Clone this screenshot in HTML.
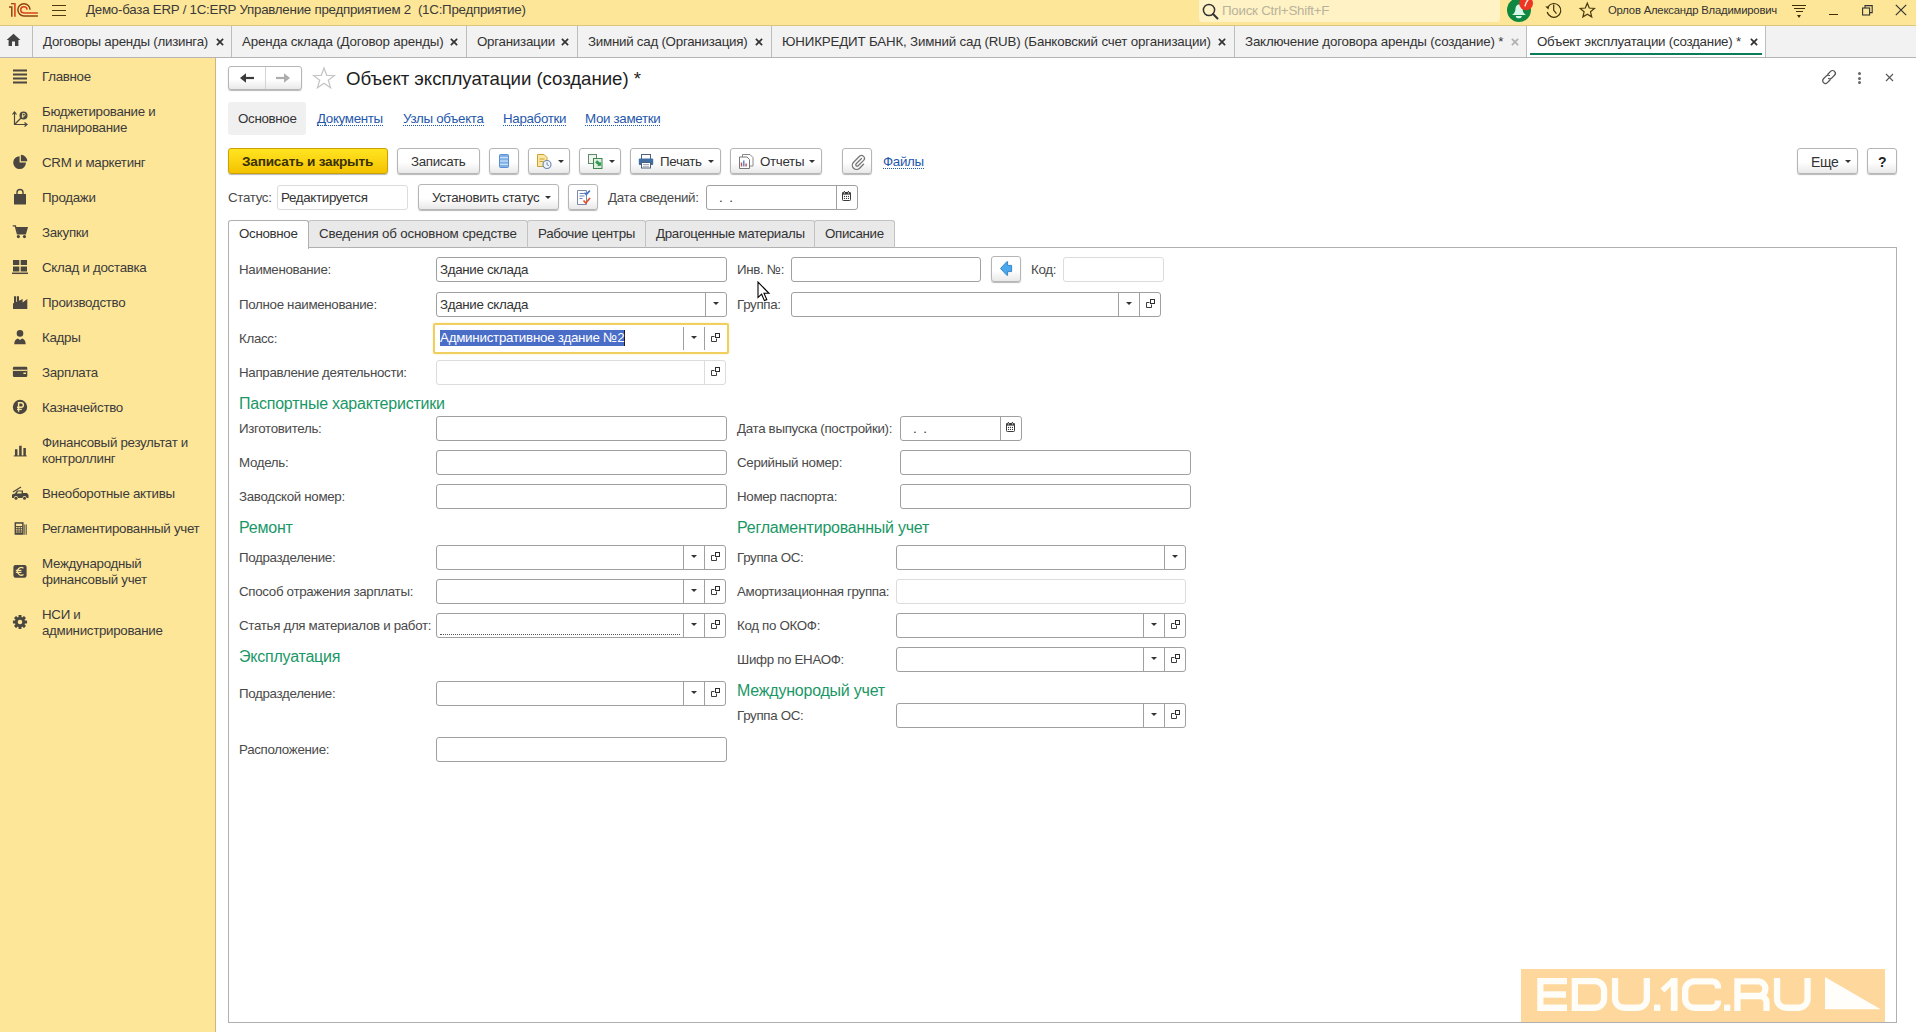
<!DOCTYPE html>
<html lang="ru">
<head>
<meta charset="utf-8">
<title>1C ERP</title>
<style>
*{box-sizing:border-box;margin:0;padding:0}
html,body{width:1916px;height:1032px;overflow:hidden;background:#fff}
body{font-family:"Liberation Sans",sans-serif;font-size:13.33px;letter-spacing:-0.32px;color:#333;position:relative}
.abs{position:absolute}
.t{position:absolute;white-space:pre;line-height:16px;height:16px}
#titlebar{position:absolute;left:0;top:0;width:1916px;height:25px;background:#fee698}
#tabbar{position:absolute;left:0;top:25px;width:1916px;height:33px;background:#f2f2f2;border-bottom:1px solid #b4b4b4;border-top:1px solid #dcc67e;letter-spacing:-0.25px}
#sidebar{position:absolute;left:0;top:58px;width:216px;height:974px;background:#fee699;border-right:1px solid #cbb880;letter-spacing:-0.3px}
.tab{position:absolute;top:0;height:31px;border-right:1px solid #bdbdbd;color:#333}
.tab .tt{position:absolute;top:7.5px;white-space:pre;line-height:16px}
.tab .x{position:absolute;top:11.5px;width:8px;height:8px}
.sb{position:absolute;left:42px;line-height:16px;color:#3b3b3b;white-space:pre;margin-top:.5px}
.ico{position:absolute;left:11px;width:18px;height:18px}
.btn{position:absolute;height:26px;border:1px solid #b5b5b5;border-radius:3px;background:linear-gradient(#ffffff 0%,#ffffff 55%,#e9e9e9 100%);box-shadow:0 1px 1px rgba(0,0,0,.28);color:#333}
.btn .bt{position:absolute;top:4.5px;white-space:pre;line-height:16px}
.dd{position:absolute;width:0;height:0;border-left:3px solid transparent;border-right:3px solid transparent;border-top:3.5px solid #333;top:11px;margin-left:-.5px}
.lnk{position:absolute;white-space:pre;line-height:16px;color:#1f58ab;border-bottom:1px dotted #1f58ab;height:15px}
.inp{position:absolute;height:25px;border:1px solid #a0a0a0;border-radius:3px;background:#fff}
.inp.ro{border-color:#dcdcdc}
.inp .v{position:absolute;left:3px;top:4px;white-space:pre;line-height:16px;color:#333}
.inp .sep{position:absolute;top:0;width:1px;height:23px;background:#a0a0a0}
.inp.ro .sep{background:#dcdcdc}
.lbl{position:absolute;white-space:pre;line-height:16px;height:16px;color:#4a4a4a}
.sec{position:absolute;white-space:pre;font-size:16px;letter-spacing:-0.22px;line-height:20px;color:#1a9766}
.ddi{position:absolute;top:9px;width:0;height:0;border-left:3px solid transparent;border-right:3px solid transparent;border-top:3.5px solid #333}
.opn{position:absolute;top:6px;width:9px;height:9px}
</style>
</head>
<body>
<div id="root" style="position:absolute;left:0;top:0;width:1916px;height:1032px">
<div id="titlebar">
<svg class="abs" style="left:0;top:0" width="42" height="22" viewBox="0 0 42 22">
<g fill="none" stroke-linecap="butt" stroke-linejoin="miter">
<path d="M9 7.1 L11.8 7.1 L11.8 16.7" stroke="#8a4513" stroke-width="1.5"/>
<path d="M11 3.7 L14.9 3.7" stroke="#8a4513" stroke-width="1.3"/>
<path d="M14.9 3.1 L14.9 16.7" stroke="#dc4a22" stroke-width="1.7"/>
<path d="M30.05 9.75 A6.1 6.1 0 1 0 23.95 15.9 L37.9 15.9" stroke="#8a4513" stroke-width="1.5"/>
<path d="M27 9.7 A3.15 3.15 0 1 0 23.85 12.95 L37.9 12.95" stroke="#d8431d" stroke-width="1.5"/>
</g></svg>
<div class="abs" style="left:52px;top:4.8px;width:14px;height:1.3px;background:#4d3a10"></div>
<div class="abs" style="left:52px;top:9.8px;width:14px;height:1.3px;background:#4d3a10"></div>
<div class="abs" style="left:52px;top:14.8px;width:14px;height:1.3px;background:#4d3a10"></div>
<div class="t" style="left:86px;top:2px;letter-spacing:-0.25px;color:#3a3a3a">Демо-база ERP / 1С:ERP Управление предприятием 2  (1С:Предприятие)</div>
<div class="abs" style="left:1199px;top:0;width:301px;height:22px;background:#fff2c5;border-radius:0 0 3px 3px"></div>
<svg class="abs" style="left:1201px;top:2px" width="18" height="18" viewBox="0 0 18 18"><circle cx="8" cy="8" r="5.6" fill="none" stroke="#333" stroke-width="1.5"/><path d="M12 12 L16.5 16.5" stroke="#333" stroke-width="2" stroke-linecap="round"/></svg>
<div class="t" style="left:1222px;top:3px;letter-spacing:-0.25px;color:#b9b39b">Поиск Ctrl+Shift+F</div>
<svg class="abs" style="left:1500px;top:0" width="40" height="25" viewBox="1500 0 40 25"><circle cx="1519" cy="9.9" r="12" fill="#0e8740"/><path d="M1519 4.6 C1516.5 4.6 1515.6 7 1515.4 9.5 C1515.2 12 1514 13.6 1512 15 L1526 15 C1524 13.6 1522.8 12 1522.6 9.5 C1522.4 7 1521.5 4.6 1519 4.6 Z" fill="#d9f6ea"/><path d="M1515.8 16 H1521.8 A3 2.3 0 0 1 1515.8 16 Z" fill="#d9f6ea"/><circle cx="1526.1" cy="3.4" r="6.9" fill="#ee3524"/><path d="M1528.2 -0.5 C1526.5 1.5 1525.5 4 1524.9 6.4" stroke="#ffe2da" stroke-width="1.5" fill="none"/></svg>
<svg class="abs" style="left:1543px;top:0" width="22" height="22" viewBox="1543 0 22 22"><path d="M1548.2 6.5 A6.9 6.9 0 1 1 1547.2 12" fill="none" stroke="#3d2f0a" stroke-width="1.2"/><path d="M1545.3 6.6 L1549.3 6.2 L1548.4 9.6 Z" fill="#3d2f0a"/><path d="M1553.7 4.4 L1553.7 10.3 L1556.5 13.6" fill="none" stroke="#3d2f0a" stroke-width="1.2"/></svg>
<svg class="abs" style="left:1578px;top:1px" width="18" height="18" viewBox="0 0 18 18"><path d="M9.3 2.2 L11.3 7 L16.4 7.4 L12.5 10.8 L13.7 15.9 L9.3 13.2 L4.9 15.9 L6.1 10.8 L2.2 7.4 L7.3 7 Z" fill="none" stroke="#4a3a10" stroke-width="1.25" stroke-linejoin="miter"/></svg>
<div class="t" style="left:1608px;top:3px;font-size:11.3px;letter-spacing:-0.2px;color:#333;line-height:14px">Орлов Александр Владимирович</div>
<div class="abs" style="left:1792px;top:4.5px;width:14px;height:1px;background:#3d2f0a"></div>
<div class="abs" style="left:1794px;top:8px;width:10.5px;height:1px;background:#3d2f0a"></div>
<div class="abs" style="left:1795.5px;top:11.2px;width:7.5px;height:1px;background:#3d2f0a"></div>
<div class="abs" style="left:1796.6px;top:15px;width:0;height:0;border-left:2.6px solid transparent;border-right:2.6px solid transparent;border-top:3px solid #3d2f0a"></div>
<div class="abs" style="left:1829px;top:14px;width:9px;height:1.2px;background:#3d2f0a"></div>
<svg class="abs" style="left:1862px;top:5px" width="11" height="11" viewBox="0 0 11 11"><rect x="0.6" y="3" width="7" height="7" fill="none" stroke="#333" stroke-width="1.1"/><path d="M3 3 L3 0.6 L10.2 0.6 L10.2 7.6 L7.8 7.6" fill="none" stroke="#333" stroke-width="1.1"/></svg>
<svg class="abs" style="left:1895px;top:4px" width="12" height="12" viewBox="0 0 12 12"><path d="M0.8 0.8 L11.2 11.2 M11.2 0.8 L0.8 11.2" stroke="#333" stroke-width="1.2"/></svg>
</div>
<div id="tabbar">
<div class="abs" style="left:0;top:0;width:33px;height:31px;border-right:1px solid #bdbdbd"></div>
<svg class="abs" style="left:6px;top:7px" width="15" height="14" viewBox="0 0 15 14"><path d="M7.5 0.8 L0.6 7 L2.6 7 L2.6 13 L6 13 L6 8.6 L9 8.6 L9 13 L12.4 13 L12.4 7 L14.4 7 Z" fill="#424242"/></svg>
<div class="tab" style="left:33px;width:199px;"><span class="tt" style="left:10px">Договоры аренды (лизинга)</span><svg class="x" style="left:183px" viewBox="0 0 9 9"><path d="M1 1 L8 8 M8 1 L1 8" stroke="#333" stroke-width="1.9"/></svg></div>
<div class="tab" style="left:232px;width:235px;"><span class="tt" style="left:10px;letter-spacing:-0.17px">Аренда склада (Договор аренды)</span><svg class="x" style="left:218px" viewBox="0 0 9 9"><path d="M1 1 L8 8 M8 1 L1 8" stroke="#333" stroke-width="1.9"/></svg></div>
<div class="tab" style="left:467px;width:111px;"><span class="tt" style="left:10px">Организации</span><svg class="x" style="left:94px" viewBox="0 0 9 9"><path d="M1 1 L8 8 M8 1 L1 8" stroke="#333" stroke-width="1.9"/></svg></div>
<div class="tab" style="left:578px;width:194px;"><span class="tt" style="left:10px">Зимний сад (Организация)</span><svg class="x" style="left:177px" viewBox="0 0 9 9"><path d="M1 1 L8 8 M8 1 L1 8" stroke="#333" stroke-width="1.9"/></svg></div>
<div class="tab" style="left:772px;width:463px;"><span class="tt" style="left:10px;letter-spacing:-0.17px">ЮНИКРЕДИТ БАНК, Зимний сад (RUB) (Банковский счет организации)</span><svg class="x" style="left:446px" viewBox="0 0 9 9"><path d="M1 1 L8 8 M8 1 L1 8" stroke="#333" stroke-width="1.9"/></svg></div>
<div class="tab" style="left:1235px;width:292px;"><span class="tt" style="left:10px;letter-spacing:-0.17px">Заключение договора аренды (создание) *</span><svg class="x" style="left:276px" viewBox="0 0 9 9"><path d="M1 1 L8 8 M8 1 L1 8" stroke="#b0b0b0" stroke-width="1.9"/></svg></div>
<div class="tab" style="left:1527px;width:239px;background:#fff;"><span class="tt" style="left:10px">Объект эксплуатации (создание) *</span><svg class="x" style="left:223px" viewBox="0 0 9 9"><path d="M1 1 L8 8 M8 1 L1 8" stroke="#333" stroke-width="1.9"/></svg><div class="abs" style="left:3px;top:27px;width:232px;height:2px;background:#0c7b5c"></div></div>
</div>
<div id="sidebar">
<svg class="ico" style="top:9px" viewBox="0 0 18 18"><path d="M2 3.5h14M2 7.5h14M2 11.5h14M2 15.5h14" stroke="#4b4740" stroke-width="2"/></svg><div class="sb" style="top:10px">Главное</div>
<svg class="ico" style="top:52px" viewBox="0 0 18 18"><g fill="none" stroke="#4b4740" stroke-width="1.2"><path d="M3.5 2 L3.5 14.5 L16 14.5"/><path d="M1.5 4.5 L3.5 2 L5.5 4.5 M13.5 12.5 L16 14.5 L13.5 16.5"/><path d="M4 14 L10 8"/></g><circle cx="12.5" cy="5.5" r="4" fill="#4b4740"/><path d="M11.6 7.8 V3.4 h1.4 a1.2 1.2 0 0 1 0 2.4 h-2.2 M10.8 6.8 h2.4" stroke="#fee699" stroke-width=".8" fill="none"/></svg><div class="sb" style="top:45px">Бюджетирование и
планирование</div>
<svg class="ico" style="top:95px" viewBox="0 0 18 18"><path d="M8.6 3.2 A6.4 6.4 0 1 0 15 9.6 L8.6 9.6 Z" fill="#4b4740"/><path d="M9.9 1.8 A6.4 6.4 0 0 1 16.3 8.2 L9.9 8.2 Z" fill="#4b4740"/></svg><div class="sb" style="top:96px">CRM и маркетинг</div>
<svg class="ico" style="top:130px" viewBox="0 0 18 18"><path d="M3 6 H15 V16.5 H3 Z" fill="#4b4740"/><path d="M6 8 V4.5 A3 3 0 0 1 12 4.5 V8" fill="none" stroke="#4b4740" stroke-width="1.4"/></svg><div class="sb" style="top:131px">Продажи</div>
<svg class="ico" style="top:165px" viewBox="0 0 18 18"><g transform="translate(9.1 8.8) scale(.87) translate(-9 -9.3)"><path d="M0.5 2.5 H3.5 L6 11.5 H15 L17 4.5 H4.5" fill="none" stroke="#4b4740" stroke-width="1.7"/><path d="M4.8 5 H16.6 L15 11 H6.3 Z" fill="#4b4740"/><circle cx="7" cy="14.8" r="1.8" fill="#4b4740"/><circle cx="14" cy="14.8" r="1.8" fill="#4b4740"/></g></svg><div class="sb" style="top:166px">Закупки</div>
<svg class="ico" style="top:200px" viewBox="0 0 18 18"><path d="M2 2 H8.3 V7 H2 Z M9.7 2 H16 V7 H9.7 Z M2 8.4 H8.3 V13.4 H2 Z M9.7 8.4 H16 V13.4 H9.7 Z" fill="#4b4740"/><path d="M1 15.3 H17" stroke="#4b4740" stroke-width="1.5"/></svg><div class="sb" style="top:201px">Склад и доставка</div>
<svg class="ico" style="top:235px" viewBox="0 0 18 18"><path d="M2 16 V10.6 L3 10.1 V3.2 H5.1 V9.1 L5.9 8.7 V3.2 H8 V7.7 L11.6 5.9 V9.4 L16.3 6 V16 Z" fill="#4b4740"/></svg><div class="sb" style="top:236px">Производство</div>
<svg class="ico" style="top:270px" viewBox="0 0 18 18"><circle cx="9" cy="5.4" r="3.3" fill="#4b4740"/><path d="M3.3 16.2 C3.3 12.6 5.4 11 7 10.6 L9 12 L11 10.6 C12.6 11 14.7 12.6 14.7 16.2 Z" fill="#4b4740"/></svg><div class="sb" style="top:271px">Кадры</div>
<svg class="ico" style="top:305px" viewBox="0 0 18 18"><rect x="1.9" y="3.8" width="14.4" height="10.2" rx="1.3" fill="#4b4740"/><path d="M1.9 7.3 H16.3" stroke="#fee699" stroke-width="1.2"/><rect x="12.4" y="9.6" width="2.6" height="1.4" fill="#fee699"/></svg><div class="sb" style="top:306px">Зарплата</div>
<svg class="ico" style="top:340px" viewBox="0 0 18 18"><circle cx="9" cy="9" r="7.2" fill="#4b4740"/><path d="M7.6 13.8 V4.7 h2.5 a2.3 2.3 0 0 1 0 4.6 h-4.1 M6 11.4 h4.8" stroke="#fee699" stroke-width="1.4" fill="none"/></svg><div class="sb" style="top:341px">Казначейство</div>
<svg class="ico" style="top:383px" viewBox="0 0 18 18"><g transform="translate(9 9.3) scale(0.84) translate(-9 -9.3)"><path d="M3 16 V8 H6 V16 Z M8 16 V4 H11 V16 Z M13 16 V6.5 H16 V16 Z" fill="#4b4740"/><path d="M1.5 16 H17" stroke="#4b4740" stroke-width="1.2"/></g></svg><div class="sb" style="top:376px">Финансовый результат и
контроллинг</div>
<svg class="ico" style="top:426px" viewBox="0 0 18 18"><path d="M1 14 V10.5 L4 9.5 L6 6.5 H12 L12 9 H16 L17.5 11 V14 H15.5 A2 2 0 0 0 11.5 14 H7 A2 2 0 0 0 3 14 Z" fill="#4b4740"/><circle cx="5" cy="14.2" r="1.5" fill="#4b4740"/><circle cx="13.5" cy="14.2" r="1.5" fill="#4b4740"/><path d="M2 8 L10 3" stroke="#4b4740" stroke-width="1.3"/><path d="M7 7.6 H10.6 V9.4 H5.8 Z" fill="#fee699"/></svg><div class="sb" style="top:427px">Внеоборотные активы</div>
<svg class="ico" style="top:461px" viewBox="0 0 18 18"><g transform="translate(9 9.3) scale(0.9) translate(-9 -9.3)"><path d="M3 2.5 H13 V16.5 H3 Z" fill="#4b4740"/><path d="M4.6 4.2 H11.4 V6.8 H4.6 Z" fill="#fee699"/><path d="M4.6 8.6h1.6M7.2 8.6h1.6M9.8 8.6h1.6M4.6 11h1.6M7.2 11h1.6M9.8 11h1.6M4.6 13.4h1.6M7.2 13.4h1.6M9.8 13.4h1.6" stroke="#fee699" stroke-width="1.3"/><path d="M14.3 5 V16.5 M16 5 V16.5" stroke="#4b4740" stroke-width="1"/></g></svg><div class="sb" style="top:462px">Регламентированный учет</div>
<svg class="ico" style="top:504px" viewBox="0 0 18 18"><g transform="translate(9 9.3) scale(0.88) translate(-9 -9.3)"><rect x="1.5" y="2" width="15" height="14.5" rx="2.5" fill="#4b4740"/><path d="M13 5.8 A4.3 4.3 0 1 0 13 12.8 M4.2 8.2 H10.6 M4.2 10.4 H10.6" stroke="#fee699" stroke-width="1.4" fill="none"/></g></svg><div class="sb" style="top:497px">Международный
финансовый учет</div>
<svg class="ico" style="top:555px" viewBox="0 0 18 18"><g transform="translate(9 9.3) scale(0.88) translate(-9 -9.3)"><g transform="translate(9 9)"><g fill="#4b4740"><rect x="-1.7" y="-8" width="3.4" height="16" rx=".6"/><rect x="-1.7" y="-8" width="3.4" height="16" rx=".6" transform="rotate(45)"/><rect x="-1.7" y="-8" width="3.4" height="16" rx=".6" transform="rotate(90)"/><rect x="-1.7" y="-8" width="3.4" height="16" rx=".6" transform="rotate(135)"/><circle r="5.8"/></g><circle r="2.6" fill="#fee699"/></g></g></svg><div class="sb" style="top:548px">НСИ и
администрирование</div>
</div>
<div id="content">
<div class="btn" style="left:228px;top:66px;width:74px;height:24px;border-radius:3px"></div>
<div class="abs" style="left:265px;top:67px;width:1px;height:22px;background:#d4d4d4"></div>
<svg class="abs" style="left:239px;top:72px" width="16" height="12" viewBox="0 0 16 12"><path d="M15 6 H5" stroke="#3a3a3a" stroke-width="2.2"/><path d="M7 1.2 L1 6 L7 10.8 Z" fill="#3a3a3a"/></svg>
<svg class="abs" style="left:275px;top:72px" width="16" height="12" viewBox="0 0 16 12"><path d="M1 6 H11" stroke="#adadad" stroke-width="2.2"/><path d="M9 1.2 L15 6 L9 10.8 Z" fill="#adadad"/></svg>
<svg class="abs" style="left:312px;top:66px" width="24" height="24" viewBox="0 0 24 24"><path d="M12 2 L14.7 9.3 L22.5 9.5 L16.3 14.2 L18.6 21.8 L12 17.3 L5.4 21.8 L7.7 14.2 L1.5 9.5 L9.3 9.3 Z" fill="#fff" stroke="#c4c4c4" stroke-width="1.2" stroke-linejoin="miter"/></svg>
<div class="t" style="left:346px;top:68px;font-size:18.67px;letter-spacing:-0.05px;line-height:22px;height:22px;color:#1e1e1e">Объект эксплуатации (создание) *</div>
<svg class="abs" style="left:1820px;top:68px" width="18" height="18" viewBox="0 0 18 18"><g fill="none" stroke="#555" stroke-width="1.3" stroke-linecap="round"><path d="M7.8 6.2 L10.6 3.4 A2.7 2.7 0 0 1 14.5 7.3 L11.7 10.1 A2.7 2.7 0 0 1 8.6 10.5"/><path d="M10.2 11.8 L7.4 14.6 A2.7 2.7 0 0 1 3.5 10.7 L6.3 7.9 A2.7 2.7 0 0 1 9.4 7.5"/></g></svg>
<div class="abs" style="left:1858px;top:72px;width:3px;height:3px;border-radius:2px;background:#666"></div>
<div class="abs" style="left:1858px;top:76.5px;width:3px;height:3px;border-radius:2px;background:#666"></div>
<div class="abs" style="left:1858px;top:81px;width:3px;height:3px;border-radius:2px;background:#666"></div>
<svg class="abs" style="left:1885px;top:73px" width="9" height="9" viewBox="0 0 9 9"><path d="M1 1 L8 8 M8 1 L1 8" stroke="#555" stroke-width="1.1"/></svg>
<div class="abs" style="left:228px;top:102px;width:78px;height:33px;background:#f0f0f0;border-radius:3px"></div>
<div class="t" style="left:238px;top:110.5px;color:#333">Основное</div>
<div class="lnk" style="left:317px;top:110.5px">Документы</div>
<div class="lnk" style="left:403px;top:110.5px">Узлы объекта</div>
<div class="lnk" style="left:503px;top:110.5px">Наработки</div>
<div class="lnk" style="left:585px;top:110.5px">Мои заметки</div>
<div class="btn" style="left:228px;top:148px;width:160px;background:linear-gradient(#ffe420 0%,#fbd412 50%,#f2c200 100%);border-color:#c9a100"><span class="bt" style="left:13px;font-weight:bold;font-size:13.6px;letter-spacing:-0.2px;color:#3a3000">Записать и закрыть</span></div>
<div class="btn" style="left:397px;top:148px;width:83px"><span class="bt" style="left:13px">Записать</span></div>
<div class="btn" style="left:489px;top:148px;width:30px"><svg class="abs" style="left:9px;top:5px" width="10" height="14" viewBox="0 0 10 14"><rect x=".5" y=".5" width="9" height="13" rx="1" fill="#7db1e8" stroke="#5b8fd0"/><path d="M1 3.7h8M1 7h8M1 10.3h8" stroke="#dcebfa" stroke-width="1"/></svg></div>
<div class="btn" style="left:528px;top:148px;width:42px"><svg class="abs" style="left:7px;top:4px" width="17" height="17" viewBox="0 0 17 17"><path d="M1.5 1.5 H8 L11 4.5 V13.5 H1.5 Z" fill="#fbe7a0" stroke="#c9a038"/><path d="M3.5 6h5M3.5 8.5h4" stroke="#c9a038"/><circle cx="11" cy="11.5" r="4" fill="#eef3fa" stroke="#6a84ad" stroke-width="1.1"/><path d="M11 9.3 V11.7 L12.8 12.6" stroke="#6a84ad" fill="none"/></svg><div class="dd" style="left:29px"></div></div>
<div class="btn" style="left:579px;top:148px;width:42px"><svg class="abs" style="left:7px;top:4px" width="17" height="17" viewBox="0 0 17 17"><rect x="1.5" y="1.5" width="8" height="9" fill="#eef5ee" stroke="#5e8a6a"/><rect x="6.5" y="5.5" width="8.5" height="10" fill="#dff0e0" stroke="#3f8552"/><path d="M8.5 8.5 L12.5 8.5 L12.5 7 L15 10 L12.5 13 L12.5 11.5 L8.5 11.5 Z" fill="#2e9a52" transform="rotate(40 11 10)"/></svg><div class="dd" style="left:29px"></div></div>
<div class="btn" style="left:630px;top:148px;width:91px"><svg class="abs" style="left:7px;top:5px" width="16" height="15" viewBox="0 0 16 15"><rect x="3.5" y=".5" width="9" height="5" fill="#fff" stroke="#50607a"/><rect x=".8" y="4.5" width="14.4" height="6.5" rx="1" fill="#3f6ea3"/><rect x="3.5" y="8.5" width="9" height="5.5" fill="#fff" stroke="#50607a"/><path d="M5 10.5h6M5 12.3h6" stroke="#8a96aa" stroke-width=".8"/></svg><span class="bt" style="left:29px">Печать</span><div class="dd" style="left:77px"></div></div>
<div class="btn" style="left:730px;top:148px;width:92px"><svg class="abs" style="left:7px;top:4px" width="17" height="17" viewBox="0 0 17 17"><path d="M4.5 1.5 H12 L15 4.5 V13 H4.5 Z" fill="#fff" stroke="#8a8a8a"/><path d="M1.5 4 H9 L11.5 6.5 V15.5 H1.5 Z" fill="#fff" stroke="#777"/><path d="M3.5 13.5 V9.5 M8.1 13.5 V10.5" stroke="#c0504d" stroke-width="1.4"/><path d="M5.8 13.5 V7.5" stroke="#4f81bd" stroke-width="1.4"/></svg><span class="bt" style="left:29px">Отчеты</span><div class="dd" style="left:78px"></div></div>
<div class="btn" style="left:842px;top:148px;width:30px"><svg class="abs" style="left:7px;top:4px" width="16" height="17" viewBox="0 0 16 17"><path d="M11.5 5.5 L6.2 10.8 A1.4 1.4 0 0 0 8.2 12.8 L13.6 7.4 A2.9 2.9 0 0 0 9.5 3.3 L3.6 9.2 A4.2 4.2 0 0 0 9.6 15.2 L13.5 11.3" fill="none" stroke="#777" stroke-width="1.3" stroke-linecap="round"/></svg></div>
<div class="lnk" style="left:883px;top:153.5px">Файлы</div>
<div class="btn" style="left:1797px;top:148px;width:61px"><span class="bt" style="left:13px;font-size:14px">Еще</span><div class="dd" style="left:47px"></div></div>
<div class="btn" style="left:1867px;top:148px;width:30px"><span class="bt" style="left:10px;font-weight:bold;font-size:14px;color:#222">?</span></div>
<div class="lbl" style="left:228px;top:190px">Статус:</div>
<div class="inp ro" style="left:277px;top:185px;width:131px;"><span class="v">Редактируется</span></div>
<div class="btn" style="left:418px;top:184px;width:141px"><span class="bt" style="left:13px">Установить статус</span><div class="dd" style="left:126px"></div></div>
<div class="btn" style="left:568px;top:184px;width:30px"><svg class="abs" style="left:6px;top:4px" width="18" height="18" viewBox="0 0 18 18"><path d="M2.5 1.5 H11.5 V15.5 H2.5 Z" fill="#fff" stroke="#7a8aa8"/><path d="M4.5 4.5h5M4.5 7h5M4.5 9.5h3" stroke="#6c86b8" stroke-width="1.1"/><path d="M9.5 3.8 L11.3 5.6 L14.8 1.6" fill="none" stroke="#3f74c9" stroke-width="1.6"/><path d="M8.5 11.5 L10.8 14 L15 9" fill="none" stroke="#e0522f" stroke-width="1.8"/></svg></div>
<div class="lbl" style="left:608px;top:190px">Дата сведений:</div>
<div class="inp" style="left:706px;top:185px;width:152px;"><div class="sep" style="left:129px"></div><svg class="abs" style="left:135px;top:5px" width="9" height="10" viewBox="0 0 9 10"><rect x=".5" y="1.5" width="8" height="8" rx=".8" fill="#fff" stroke="#3a3a3a" stroke-width="1"/><path d="M.3 2.5 H8.7" stroke="#3a3a3a" stroke-width="2.2"/><path d="M2.4 0 V1.4 M6.4 0 V1.4" stroke="#3a3a3a" stroke-width="1.1"/><circle cx="2.4" cy="1.9" r=".55" fill="#fff"/><circle cx="6.4" cy="1.9" r=".55" fill="#fff"/><g fill="#3a3a3a"><circle cx="2.5" cy="5.4" r=".6"/><circle cx="4.5" cy="5.4" r=".6"/><circle cx="6.5" cy="5.4" r=".6"/><circle cx="2.5" cy="7.4" r=".6"/><circle cx="4.5" cy="7.4" r=".6"/><circle cx="6.5" cy="7.4" r=".6"/></g></svg><span class="v" style="left:12px">.  .</span></div>
<div class="abs" style="left:228px;top:247px;width:1669px;height:776px;border:1px solid #b0b0b0;background:#fff"></div>
<div class="abs" style="left:308px;top:220px;width:220px;height:28px;border:1px solid #c2c2c2;border-bottom-color:#b0b0b0;border-radius:3px 3px 0 0;background:#e9e9e9"><span class="t" style="left:10px;top:5px;color:#333;letter-spacing:-0.18px">Сведения об основном средстве</span></div>
<div class="abs" style="left:527px;top:220px;width:119px;height:28px;border:1px solid #c2c2c2;border-bottom-color:#b0b0b0;border-radius:3px 3px 0 0;background:#e9e9e9"><span class="t" style="left:10px;top:5px;color:#333">Рабочие центры</span></div>
<div class="abs" style="left:645px;top:220px;width:170px;height:28px;border:1px solid #c2c2c2;border-bottom-color:#b0b0b0;border-radius:3px 3px 0 0;background:#e9e9e9"><span class="t" style="left:10px;top:5px;color:#333">Драгоценные материалы</span></div>
<div class="abs" style="left:814px;top:220px;width:81px;height:28px;border:1px solid #c2c2c2;border-bottom-color:#b0b0b0;border-radius:3px 3px 0 0;background:#e9e9e9"><span class="t" style="left:10px;top:5px;color:#333">Описание</span></div>
<div class="abs" style="left:228px;top:220px;width:81px;height:29px;border:1px solid #b0b0b0;border-bottom:none;border-radius:3px 3px 0 0;background:#fff"><span class="t" style="left:10px;top:5px;color:#333">Основное</span></div>
<div class="lbl" style="left:239px;top:262px">Наименование:</div>
<div class="inp" style="left:436px;top:257px;width:291px;"><span class="v">Здание склада</span></div>
<div class="lbl" style="left:737px;top:262px">Инв. №:</div>
<div class="inp" style="left:791px;top:257px;width:190px;"></div>
<div class="btn" style="left:991px;top:256px;width:30px"><svg class="abs" style="left:8px;top:4px" width="13" height="16" viewBox="0 0 13 16"><path d="M0.5 7.5 L6.8 0.7 L7.6 0.7 L7.6 4.4 L11.6 4.4 L11.6 10.6 L7.6 10.6 L7.6 14.3 L6.8 14.3 Z" fill="#4aa9ee" stroke="#2f7fbf" stroke-width=".9" stroke-linejoin="round"/></svg></div>
<div class="lbl" style="left:1031px;top:262px">Код:</div>
<div class="inp ro" style="left:1063px;top:257px;width:101px;"></div>
<div class="lbl" style="left:239px;top:297px">Полное наименование:</div>
<div class="inp" style="left:436px;top:292px;width:291px;"><span class="v">Здание склада</span><div class="sep" style="left:268px"></div><div class="ddi" style="left:276px"></div></div>
<div class="lbl" style="left:737px;top:297px">Группа:</div>
<div class="inp" style="left:791px;top:292px;width:370px;"><div class="sep" style="left:347px"></div><svg class="opn" style="left:354px" viewBox="0 0 9 9"><path d="M3.5 3.5 H.5 V8.5 H5.5 V5.5" fill="none" stroke="#3c3c3c" stroke-width="1"/><rect x="4.5" y=".5" width="4" height="4" fill="none" stroke="#2c2c2c" stroke-width="1"/></svg><div class="sep" style="left:326px"></div><div class="ddi" style="left:334px"></div></div>
<div class="lbl" style="left:239px;top:331px">Класс:</div>
<div class="abs" style="left:433px;top:323px;width:296px;height:31px;border:2px solid #f0cf5e;border-radius:2px;box-shadow:0 0 2px #f8e6a0;background:#fff"></div>
<div class="inp" style="left:436px;top:326px;width:290px;border-color:transparent;background:transparent"><div class="sep" style="left:267px"></div><svg class="opn" style="left:274px" viewBox="0 0 9 9"><path d="M3.5 3.5 H.5 V8.5 H5.5 V5.5" fill="none" stroke="#3c3c3c" stroke-width="1"/><rect x="4.5" y=".5" width="4" height="4" fill="none" stroke="#2c2c2c" stroke-width="1"/></svg><div class="sep" style="left:246px"></div><div class="ddi" style="left:254px"></div><span class="abs" style="left:3px;top:3px;height:16px;line-height:16px;white-space:pre;background:#4a6dc8;color:#fff;letter-spacing:-0.24px;border-right:1px solid #1a1a1a">Административное здание №2</span></div>
<div class="lbl" style="left:239px;top:365px">Направление деятельности:</div>
<div class="inp ro" style="left:436px;top:360px;width:290px;"><div class="sep" style="left:267px"></div><svg class="opn" style="left:274px" viewBox="0 0 9 9"><path d="M3.5 3.5 H.5 V8.5 H5.5 V5.5" fill="none" stroke="#3c3c3c" stroke-width="1"/><rect x="4.5" y=".5" width="4" height="4" fill="none" stroke="#2c2c2c" stroke-width="1"/></svg></div>
<div class="sec" style="left:239px;top:394px">Паспортные характеристики</div>
<div class="lbl" style="left:239px;top:421px">Изготовитель:</div>
<div class="inp" style="left:436px;top:416px;width:291px;"></div>
<div class="lbl" style="left:737px;top:421px">Дата выпуска (постройки):</div>
<div class="inp" style="left:900px;top:416px;width:122px;"><div class="sep" style="left:99px"></div><svg class="abs" style="left:105px;top:5px" width="9" height="10" viewBox="0 0 9 10"><rect x=".5" y="1.5" width="8" height="8" rx=".8" fill="#fff" stroke="#3a3a3a" stroke-width="1"/><path d="M.3 2.5 H8.7" stroke="#3a3a3a" stroke-width="2.2"/><path d="M2.4 0 V1.4 M6.4 0 V1.4" stroke="#3a3a3a" stroke-width="1.1"/><circle cx="2.4" cy="1.9" r=".55" fill="#fff"/><circle cx="6.4" cy="1.9" r=".55" fill="#fff"/><g fill="#3a3a3a"><circle cx="2.5" cy="5.4" r=".6"/><circle cx="4.5" cy="5.4" r=".6"/><circle cx="6.5" cy="5.4" r=".6"/><circle cx="2.5" cy="7.4" r=".6"/><circle cx="4.5" cy="7.4" r=".6"/><circle cx="6.5" cy="7.4" r=".6"/></g></svg><span class="v" style="left:12px">.  .</span></div>
<div class="lbl" style="left:239px;top:455px">Модель:</div>
<div class="inp" style="left:436px;top:450px;width:291px;"></div>
<div class="lbl" style="left:737px;top:455px">Серийный номер:</div>
<div class="inp" style="left:900px;top:450px;width:291px;"></div>
<div class="lbl" style="left:239px;top:489px">Заводской номер:</div>
<div class="inp" style="left:436px;top:484px;width:291px;"></div>
<div class="lbl" style="left:737px;top:489px">Номер паспорта:</div>
<div class="inp" style="left:900px;top:484px;width:291px;"></div>
<div class="sec" style="left:239px;top:518px">Ремонт</div>
<div class="sec" style="left:737px;top:518px">Регламентированный учет</div>
<div class="lbl" style="left:239px;top:550px">Подразделение:</div>
<div class="inp" style="left:436px;top:545px;width:290px;"><div class="sep" style="left:267px"></div><svg class="opn" style="left:274px" viewBox="0 0 9 9"><path d="M3.5 3.5 H.5 V8.5 H5.5 V5.5" fill="none" stroke="#3c3c3c" stroke-width="1"/><rect x="4.5" y=".5" width="4" height="4" fill="none" stroke="#2c2c2c" stroke-width="1"/></svg><div class="sep" style="left:246px"></div><div class="ddi" style="left:254px"></div></div>
<div class="lbl" style="left:737px;top:550px">Группа ОС:</div>
<div class="inp" style="left:896px;top:545px;width:290px;"><div class="sep" style="left:267px"></div><div class="ddi" style="left:275px"></div></div>
<div class="lbl" style="left:239px;top:584px">Способ отражения зарплаты:</div>
<div class="inp" style="left:436px;top:579px;width:290px;"><div class="sep" style="left:267px"></div><svg class="opn" style="left:274px" viewBox="0 0 9 9"><path d="M3.5 3.5 H.5 V8.5 H5.5 V5.5" fill="none" stroke="#3c3c3c" stroke-width="1"/><rect x="4.5" y=".5" width="4" height="4" fill="none" stroke="#2c2c2c" stroke-width="1"/></svg><div class="sep" style="left:246px"></div><div class="ddi" style="left:254px"></div></div>
<div class="lbl" style="left:737px;top:584px">Амортизационная группа:</div>
<div class="inp ro" style="left:896px;top:579px;width:290px;"></div>
<div class="lbl" style="left:239px;top:618px">Статья для материалов и работ:</div>
<div class="inp" style="left:436px;top:613px;width:290px;"><div class="sep" style="left:267px"></div><svg class="opn" style="left:274px" viewBox="0 0 9 9"><path d="M3.5 3.5 H.5 V8.5 H5.5 V5.5" fill="none" stroke="#3c3c3c" stroke-width="1"/><rect x="4.5" y=".5" width="4" height="4" fill="none" stroke="#2c2c2c" stroke-width="1"/></svg><div class="sep" style="left:246px"></div><div class="ddi" style="left:254px"></div><div class="abs" style="left:3px;top:20px;width:240px;border-bottom:1px dotted #555"></div></div>
<div class="lbl" style="left:737px;top:618px">Код по ОКОФ:</div>
<div class="inp" style="left:896px;top:613px;width:290px;"><div class="sep" style="left:267px"></div><svg class="opn" style="left:274px" viewBox="0 0 9 9"><path d="M3.5 3.5 H.5 V8.5 H5.5 V5.5" fill="none" stroke="#3c3c3c" stroke-width="1"/><rect x="4.5" y=".5" width="4" height="4" fill="none" stroke="#2c2c2c" stroke-width="1"/></svg><div class="sep" style="left:246px"></div><div class="ddi" style="left:254px"></div></div>
<div class="sec" style="left:239px;top:647px">Эксплуатация</div>
<div class="lbl" style="left:737px;top:652px">Шифр по ЕНАОФ:</div>
<div class="inp" style="left:896px;top:647px;width:290px;"><div class="sep" style="left:267px"></div><svg class="opn" style="left:274px" viewBox="0 0 9 9"><path d="M3.5 3.5 H.5 V8.5 H5.5 V5.5" fill="none" stroke="#3c3c3c" stroke-width="1"/><rect x="4.5" y=".5" width="4" height="4" fill="none" stroke="#2c2c2c" stroke-width="1"/></svg><div class="sep" style="left:246px"></div><div class="ddi" style="left:254px"></div></div>
<div class="lbl" style="left:239px;top:686px">Подразделение:</div>
<div class="inp" style="left:436px;top:681px;width:290px;"><div class="sep" style="left:267px"></div><svg class="opn" style="left:274px" viewBox="0 0 9 9"><path d="M3.5 3.5 H.5 V8.5 H5.5 V5.5" fill="none" stroke="#3c3c3c" stroke-width="1"/><rect x="4.5" y=".5" width="4" height="4" fill="none" stroke="#2c2c2c" stroke-width="1"/></svg><div class="sep" style="left:246px"></div><div class="ddi" style="left:254px"></div></div>
<div class="sec" style="left:737px;top:681px">Междунородый учет</div>
<div class="lbl" style="left:737px;top:708px">Группа ОС:</div>
<div class="inp" style="left:896px;top:703px;width:290px;"><div class="sep" style="left:267px"></div><svg class="opn" style="left:274px" viewBox="0 0 9 9"><path d="M3.5 3.5 H.5 V8.5 H5.5 V5.5" fill="none" stroke="#3c3c3c" stroke-width="1"/><rect x="4.5" y=".5" width="4" height="4" fill="none" stroke="#2c2c2c" stroke-width="1"/></svg><div class="sep" style="left:246px"></div><div class="ddi" style="left:254px"></div></div>
<div class="lbl" style="left:239px;top:742px">Расположение:</div>
<div class="inp" style="left:436px;top:737px;width:291px;"></div>
<svg class="abs" style="left:1521px;top:969px" width="364" height="53" viewBox="0 0 364 53">
<rect x="0" y="0" width="364" height="53" fill="#fdd79b"/>
<g fill="none" stroke="#fffdf8" stroke-width="6.3" stroke-linejoin="miter">
<path d="M46 12.15 H19.35 V38.75 H46 M19.35 25.5 H45"/>
<path d="M53.85 12.15 H74 A9 9 0 0 1 83.05 21.15 V29.75 A9 9 0 0 1 74.05 38.75 H53.85 Z"/>
<path d="M94.05 9 V29.75 A9 9 0 0 0 103.05 38.75 H116.85 A9 9 0 0 0 125.85 29.75 V9"/>
<path d="M141.5 21.5 L152.5 11" stroke-width="5.6"/>
<path d="M153.2 9 V41.9" stroke-width="6.8"/>
<path d="M196.95 19.6 V18 A5.65 5.65 0 0 0 191.3 12.35 H173.15 A9 9 0 0 0 164.15 21.35 V29.75 A9 9 0 0 0 173.15 38.75 H191.3 A5.65 5.65 0 0 0 196.95 33.1 V31.4"/>
<path d="M216.45 41.9 V12.35 H237.3 A7 7 0 0 1 244.3 19.35 V20.5 A6.5 6.5 0 0 1 237.8 27 H216.45 M236 27 H239 A6.5 6.5 0 0 1 245.5 33.5 V41.9"/>
<path d="M256.05 9 V29.75 A9 9 0 0 0 265.05 38.75 H277.55 A9 9 0 0 0 286.55 29.75 V9"/>
</g>
<rect x="133" y="35.6" width="6.3" height="6.3" fill="#fffdf8"/>
<rect x="203" y="35.6" width="6.3" height="6.3" fill="#fffdf8"/>
<path d="M304 8.1 L359.7 40.2 L304 40.2 Z" fill="#fffefb"/>
</svg>
<svg class="abs" style="left:757px;top:281px" width="14" height="21" viewBox="0 0 14 21"><path d="M1 1 L1 16.5 L4.6 13.2 L7.4 19.6 L9.8 18.6 L7 12.3 L12 12.3 Z" fill="#fff" stroke="#000" stroke-width="1.1" stroke-linejoin="miter"/></svg>
</div>
</div>
</body>
</html>
